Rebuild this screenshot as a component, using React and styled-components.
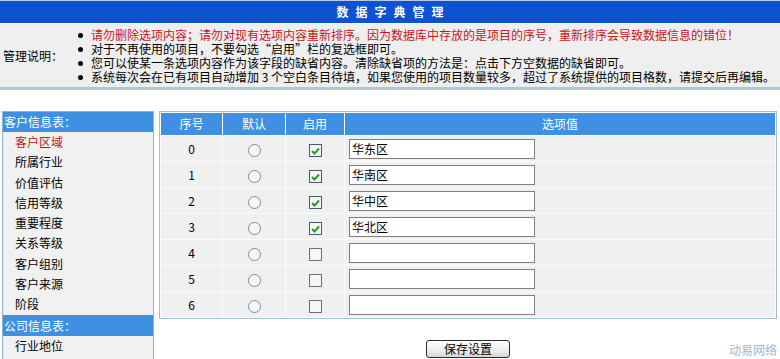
import React from "react";
import styled, { createGlobalStyle } from "styled-components";

const Global = createGlobalStyle`
  html, body { margin: 0; padding: 0; background: #fff; }
  body { font-family: "Noto Sans CJK SC", "Liberation Sans", sans-serif; font-size: 12px; color: #000; }
  * { box-sizing: border-box; }
`;

const TitleBar = styled.div`
  height: 24px;
  border-top: 1px solid #b9c9ea;
  border-bottom: 1px solid #fff;
  background: #0d52d0;
  color: #fff;
  font-weight: bold;
  font-size: 12px;
  letter-spacing: 7px;
  text-align: center;
  line-height: 22px;
  padding-left: 7px;
`;

const Notes = styled.div`
  display: flex;
  align-items: center;
  background: #efefef;
  border-bottom: 3px solid #b3c6cf;
  padding: 1px 0 1px 0;
  height: 66px;
`;

const NotesLabel = styled.div`
  width: 76px;
  padding-left: 3px;
  flex-shrink: 0;
  line-height: 14px;
`;

const NotesList = styled.ul`
  list-style: none;
  margin: 0;
  padding: 0;
`;

const NoteItem = styled.li`
  position: relative;
  padding-left: 15px;
  line-height: 14px;
  height: 14px;
  white-space: nowrap;
  color: ${(p) => (p.$warn ? "#c8141a" : "#000")};
  &::before {
    content: "";
    position: absolute;
    left: 2px;
    top: 5px;
    width: 5px;
    height: 5px;
    border-radius: 50%;
    background: #000;
  }
`;

const Body = styled.div`
  display: flex;
  align-items: flex-start;
  gap: 5px;
  margin-top: 21px;
  padding-left: 2px;
`;

const Sidebar = styled.div`
  width: 152px;
  flex-shrink: 0;
  border: 1px solid #8fb3d6;
  background: #f1f1f1;
  padding: 0 0 40px;
`;

const GroupHead = styled.div`
  height: ${(p) => p.$h || 20}px;
  line-height: ${(p) => p.$h || 20}px;
  background: #3f8fe2;
  color: #fff;
  padding-left: 1px;
`;

const SideItem = styled.div`
  height: 20.3px;
  line-height: 20.3px;
  padding-left: 12px;
  color: ${(p) => (p.$active ? "#c8141a" : "#000")};
`;

const Main = styled.div`
  width: 618px;
  display: flex;
  flex-direction: column;
`;

const Table = styled.table`
  width: 100%;
  border: 1px solid #9fc0d6;
  border-collapse: separate;
  border-spacing: 1px;
  background: #fbfbfb;
  padding: 0;
`;

const Th = styled.th`
  background: #3f8fe2;
  color: #fff;
  font-weight: normal;
  height: 22px;
  line-height: 22px;
  padding: 0;
  text-align: center;
  width: ${(p) => (p.$w ? p.$w + "px" : "auto")};
`;

const Td = styled.td`
  background: #f0f0f0;
  height: 25px;
  padding: 0;
  text-align: ${(p) => (p.$left ? "left" : "center")};
  padding-left: ${(p) => (p.$left ? "4px" : "0")};
  vertical-align: middle;
`;

const Radio = styled.span`
  display: inline-block;
  width: 13px;
  height: 13px;
  border-radius: 50%;
  border: 1px solid #7d8a96;
  background: #f8f8f8;
  vertical-align: middle;
`;

const Check = styled.span`
  display: inline-flex;
  align-items: center;
  justify-content: center;
  width: 13px;
  height: 13px;
  border: 1px solid ${(p) => (p.$on ? "#3b5f7a" : "#6f6f6f")};
  background: #f6f6f6;
  vertical-align: middle;
`;

const TextBox = styled.div`
  width: 186px;
  height: 20px;
  border: 1px solid #7f7f7f;
  background: #fff;
  line-height: 18px;
  padding-left: 2px;
  color: #000;
`;

const Footer = styled.div`
  display: grid;
  grid-template-columns: 1fr auto 1fr;
  align-items: center;
  margin-top: 20px;
`;

const SaveButton = styled.button`
  grid-column: 2;
  width: 84px;
  height: 18px;
  padding: 0;
  font-family: "Noto Sans CJK SC", sans-serif;
  font-size: 12px;
  line-height: 16px;
  color: #000;
  border: 1px solid #2b2b2b;
  border-radius: 3px;
  background: linear-gradient(#ffffff, #ececec 60%, #d6d6d6);
`;

const Brand = styled.div`
  grid-column: 3;
  justify-self: end;
  color: #9cb9cd;
  padding-top: 2px;
`;

const notes = [
  { warn: true, text: "请勿删除选项内容；请勿对现有选项内容重新排序。因为数据库中存放的是项目的序号，重新排序会导致数据信息的错位！" },
  { text: "对于不再使用的项目，不要勾选“启用”栏的复选框即可。" },
  { text: "您可以使某一条选项内容作为该字段的缺省内容。清除缺省项的方法是：点击下方空数据的缺省即可。" },
  { text: "系统每次会在已有项目自动增加 3 个空白条目待填，如果您使用的项目数量较多，超过了系统提供的项目格数，请提交后再编辑。" },
];

const sideItems = ["客户区域", "所属行业", "价值评估", "信用等级", "重要程度", "关系等级", "客户组别", "客户来源", "阶段"];

const rows = [
  { n: 0, v: "华东区", on: true },
  { n: 1, v: "华南区", on: true },
  { n: 2, v: "华中区", on: true },
  { n: 3, v: "华北区", on: true },
  { n: 4, v: "", on: false },
  { n: 5, v: "", on: false },
  { n: 6, v: "", on: false },
];

const Tick = () => (
  <svg width="9" height="8" viewBox="0 0 9 8">
    <path d="M1 4 L3.5 6.5 L8 1.5" fill="none" stroke="#21a121" strokeWidth="2" />
  </svg>
);

export default function App() {
  return (
    <>
      <Global />
      <TitleBar>数据字典管理</TitleBar>
      <Notes>
        <NotesLabel>管理说明：</NotesLabel>
        <NotesList>
          {notes.map((n, i) => (
            <NoteItem key={i} $warn={n.warn}>{n.text}</NoteItem>
          ))}
        </NotesList>
      </Notes>
      <Body>
        <Sidebar>
          <GroupHead>客户信息表：</GroupHead>
          {sideItems.map((s, i) => (
            <SideItem key={s} $active={i === 0}>{s}</SideItem>
          ))}
          <GroupHead $h={21}>公司信息表：</GroupHead>
          <SideItem>行业地位</SideItem>
        </Sidebar>
        <Main>
          <Table>
            <thead>
              <tr>
                <Th $w={61}>序号</Th>
                <Th $w={62}>默认</Th>
                <Th $w={58}>启用</Th>
                <Th>选项值</Th>
              </tr>
            </thead>
            <tbody>
              {rows.map((r) => (
                <tr key={r.n}>
                  <Td>{r.n}</Td>
                  <Td><Radio /></Td>
                  <Td><Check $on={r.on}>{r.on && <Tick />}</Check></Td>
                  <Td $left><TextBox>{r.v}</TextBox></Td>
                </tr>
              ))}
            </tbody>
          </Table>
          <Footer>
            <SaveButton>保存设置</SaveButton>
            <Brand>动易网络</Brand>
          </Footer>
        </Main>
      </Body>
    </>
  );
}
